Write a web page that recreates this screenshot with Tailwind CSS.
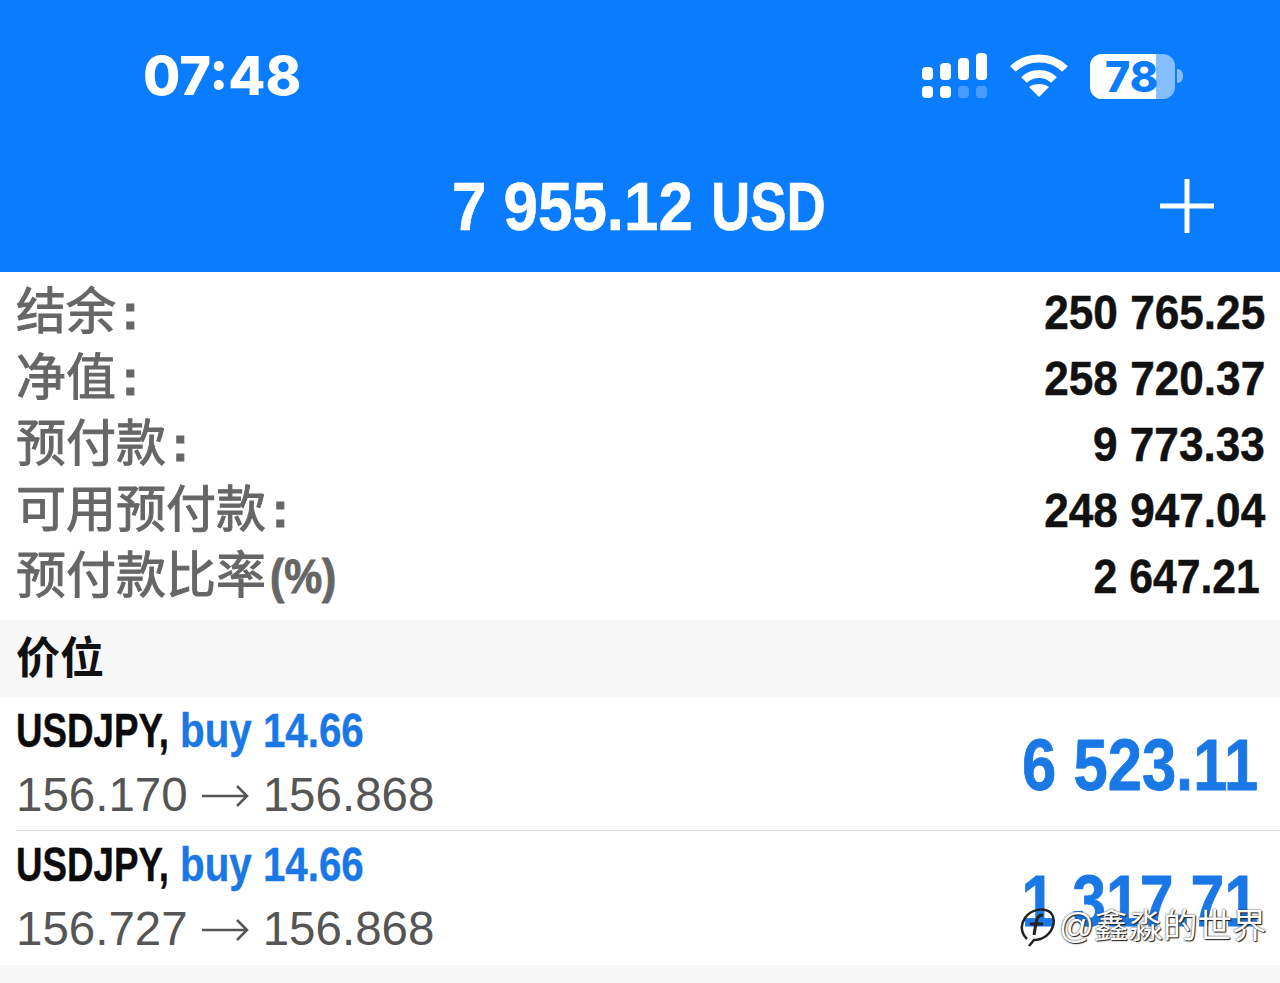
<!DOCTYPE html>
<html lang="zh">
<head>
  <meta charset="UTF-8" />
  <title>MT5 交易</title>
  <script src="https://cdn.jsdelivr.net/npm/@tailwindcss/browser@4"></script>
</head>
<body class="bg-white w-[1280px] h-[983px] overflow-hidden font-['Liberation_Sans','Noto_Sans_CJK_SC',sans-serif]">

  <!-- blue header -->
  <header class="bg-[#0a7cff] h-[272px] text-white relative">
    <div class="flex items-center justify-between h-[152px] pl-[143px] pr-[97px]">
      <span class="font-['Inter',sans-serif] font-extrabold text-[54px] leading-none">07:48</span>
      <div class="flex items-center gap-[22px]">
        <!-- signal, two sims -->
        <svg width="66" height="46" viewBox="0 0 66 46" fill="#fff">
          <rect x="0" y="14" width="11" height="13" rx="4"/>
          <rect x="18" y="10" width="11" height="17" rx="4"/>
          <rect x="36" y="5" width="11" height="22" rx="4"/>
          <rect x="54" y="0" width="11" height="27" rx="4"/>
          <rect x="0" y="33" width="11" height="12" rx="4"/>
          <rect x="18" y="33" width="11" height="12" rx="4"/>
          <rect x="36" y="33" width="11" height="12" rx="4" fill="#fff" opacity=".25"/>
          <rect x="54" y="33" width="11" height="12" rx="4" fill="#fff" opacity=".25"/>
        </svg>
        <!-- wifi -->
        <svg width="58" height="44" viewBox="0 0 58 44" fill="none" stroke="#fff" stroke-width="8">
          <path d="M3 15 C17 1 41 1 55 15"/>
          <path d="M14 26 C22 18 36 18 44 26"/>
          <path d="M29 43 L19 33 C24 29 34 29 39 33 Z" fill="#fff" stroke="none"/>
        </svg>
        <!-- battery -->
        <div class="flex items-center gap-[2px]">
          <div class="relative w-[85px] h-[45px] rounded-[12px] bg-white/50">
            <div class="w-[66px] h-full bg-white rounded-l-[12px]"></div>
            <span class="absolute left-[15px] top-0 h-full flex items-center font-['Inter',sans-serif] font-extrabold text-[43px] leading-none text-[#0a7cff]">78</span>
          </div>
          <div class="w-[6px] h-[14px] bg-white/50 rounded-r-full"></div>
        </div>
      </div>
    </div>
    <div class="flex justify-center gap-[18px] pt-[15px] pr-[2px] font-bold text-[68px] leading-[78px] whitespace-nowrap [-webkit-text-stroke:0.6px_#fff]">
      <div class="w-[241px]"><span class="inline-block origin-left scale-x-[0.91]">7 955.12</span></div>
      <div class="w-[115px]"><span class="inline-block origin-left scale-x-[0.8]">USD</span></div>
    </div>
    <svg class="absolute left-[1160px] top-[179px]" width="54" height="54" viewBox="0 0 54 54" stroke="#fff" stroke-width="5">
      <path d="M27 0V54M0 27H54"/>
    </svg>
  </header>

  <!-- account summary -->
  <section class="h-[348px] pl-[16px] pr-[15px] flex flex-col text-[50px] text-[#666] leading-none [&_b]:inline-block [&_b]:ml-[6px]">
    <div class="h-[66px] mt-[7px] flex items-center justify-between">
      <span class="[-webkit-text-stroke:1px_#666]">结余<b>:</b></span>
      <span class="inline-block origin-right scale-x-[0.92] text-[48px] font-bold text-[#111] whitespace-nowrap mt-[2px] [-webkit-text-stroke:0.5px_#111]">250 765.25</span>
    </div>
    <div class="h-[66px] flex items-center justify-between">
      <span class="[-webkit-text-stroke:1px_#666]">净值<b>:</b></span>
      <span class="inline-block origin-right scale-x-[0.92] text-[48px] font-bold text-[#111] whitespace-nowrap mt-[2px] [-webkit-text-stroke:0.5px_#111]">258 720.37</span>
    </div>
    <div class="h-[66px] flex items-center justify-between">
      <span class="[-webkit-text-stroke:1px_#666]">预付款<b>:</b></span>
      <span class="inline-block origin-right scale-x-[0.92] text-[48px] font-bold text-[#111] whitespace-nowrap mt-[2px] [-webkit-text-stroke:0.5px_#111]">9 773.33</span>
    </div>
    <div class="h-[66px] flex items-center justify-between">
      <span class="[-webkit-text-stroke:1px_#666]">可用预付款<b>:</b></span>
      <span class="inline-block origin-right scale-x-[0.92] text-[48px] font-bold text-[#111] whitespace-nowrap mt-[2px] [-webkit-text-stroke:0.5px_#111]">248 947.04</span>
    </div>
    <div class="h-[66px] flex items-center justify-between">
      <span class="flex items-center [-webkit-text-stroke:1px_#666]">预付款比率<span class="inline-block w-[70px] pl-[4px] font-bold"><span class="inline-block origin-left scale-x-[0.87] text-[49px]">(%)</span></span></span>
      <span class="inline-block origin-right scale-x-[0.89] text-[48px] font-bold text-[#111] whitespace-nowrap mt-[2px] mr-[5px] [-webkit-text-stroke:0.5px_#111]">2 647.21</span>
    </div>
  </section>

  <!-- positions -->
  <div class="h-[77px] bg-[#f7f7f7] pl-[16px] flex items-center">
    <span class="text-[44px] font-bold text-[#111] leading-none">价位</span>
  </div>

  <section class="pl-[16px]">
    <div class="h-[134px] border-b border-[#d9d9d9] flex items-start justify-between pr-[22px]">
      <div class="flex flex-col pt-[1px]">
        <div class="h-[66px] flex items-center whitespace-nowrap font-bold text-[48px] leading-none [-webkit-text-stroke:0.4px]">
          <span class="inline-block w-[164px] origin-left scale-x-[0.765] text-[#0b0b0b]">USDJPY,</span>
          <span class="inline-block origin-left scale-x-[0.84] text-[#1a78e6]">buy 14.66</span>
        </div>
        <div class="flex items-center mt-[7px] text-[47.5px] text-[#555] leading-none whitespace-nowrap">
          <span>156.170</span>
          <svg class="mx-[14px] mt-[2px]" width="47" height="24" viewBox="0 0 47 24" fill="none" stroke="#555" stroke-width="2.5"><path d="M0 12H45M35 2L45 12L35 22"/></svg>
          <span>156.868</span>
        </div>
      </div>
      <span class="inline-block origin-right scale-x-[0.855] mt-[32px] text-[72px] font-bold text-[#1a78e6] leading-none whitespace-nowrap [-webkit-text-stroke:0.8px_#1a78e6]">6 523.11</span>
    </div>
    <div class="h-[134px] flex items-start justify-between pr-[22px]">
      <div class="flex flex-col pt-[1px]">
        <div class="h-[66px] flex items-center whitespace-nowrap font-bold text-[48px] leading-none [-webkit-text-stroke:0.4px]">
          <span class="inline-block w-[164px] origin-left scale-x-[0.765] text-[#0b0b0b]">USDJPY,</span>
          <span class="inline-block origin-left scale-x-[0.84] text-[#1a78e6]">buy 14.66</span>
        </div>
        <div class="flex items-center mt-[7px] text-[47.5px] text-[#555] leading-none whitespace-nowrap">
          <span>156.727</span>
          <svg class="mx-[14px] mt-[2px]" width="47" height="24" viewBox="0 0 47 24" fill="none" stroke="#555" stroke-width="2.5"><path d="M0 12H45M35 2L45 12L35 22"/></svg>
          <span>156.868</span>
        </div>
      </div>
      <span class="inline-block origin-right scale-x-[0.845] mt-[34px] text-[72px] font-bold text-[#1a78e6] leading-none whitespace-nowrap [-webkit-text-stroke:0.8px_#1a78e6]">1 317.71</span>
    </div>
  </section>
  <div class="h-[18px] bg-[#f7f7f7]"></div>

  <!-- watermark -->
  <div class="absolute left-[1020px] top-[905px] flex items-center gap-[3px] text-white text-[34.5px] leading-none whitespace-nowrap [text-shadow:0_0_2px_#222,1px_1px_1px_#222]">
    <svg width="36" height="42" viewBox="0 0 36 42" fill="none" stroke="#222" stroke-width="2.5">
      <path d="M7 34C1 28 0 20 5 13C11 4 24 2 31 8C36 14 34 25 26 31C22 34 18 35 14 35L9 41"/>
      <path d="M23 10C18 10 17 13 16 18L14 30M10 19H23" stroke-width="3"/>
    </svg>
    <span>@鑫淼的世界</span>
  </div>
</body>
</html>
